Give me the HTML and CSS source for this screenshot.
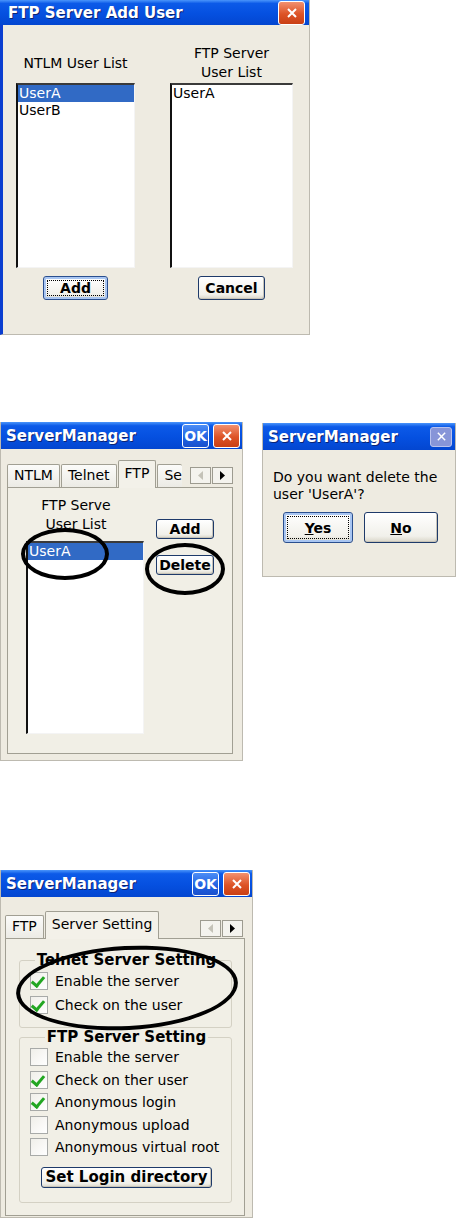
FILE: index.html
```html
<!DOCTYPE html>
<html lang="en">
<head>
    <meta charset="UTF-8">
    <meta name="viewport" content="width=device-width, initial-scale=1.0">
    <title>FTP Server User Management</title>
    <link rel="stylesheet" href="styles.css">
</head>
<body>
    <div class="page">

        <!-- Add user dialog -->
        <section class="window add-user">
            <div class="titlebar">
                <span class="title">FTP Server Add User</span>
                <span class="tb-btn tb-close">
                    <svg width="12" height="12" viewBox="0 0 12 12"><path d="M2 2 L10 10 M10 2 L2 10" stroke="#fff" stroke-width="2"/></svg>
                </span>
            </div>
            <div class="add-body">
                <div class="add-col">
                    <div class="col-label">NTLM User List</div>
                    <div class="listbox">
                        <div class="list-item selected">UserA</div>
                        <div class="list-item">UserB</div>
                    </div>
                    <button class="btn focused">Add</button>
                </div>
                <div class="add-col wide">
                    <div class="col-label">FTP Server<br>User List</div>
                    <div class="listbox">
                        <div class="list-item">UserA</div>
                    </div>
                    <button class="btn">Cancel</button>
                </div>
            </div>
        </section>

        <div class="row">
            <!-- ServerManager, FTP tab -->
            <section class="window manager">
                <div class="titlebar">
                    <span class="title">ServerManager</span>
                    <span class="tb-btn tb-ok">OK</span>
                    <span class="tb-btn tb-close">
                        <svg width="12" height="12" viewBox="0 0 12 12"><path d="M2 2 L10 10 M10 2 L2 10" stroke="#fff" stroke-width="2"/></svg>
                    </span>
                </div>
                <div class="win-body">
                    <div class="tabs">
                        <div class="tab">NTLM</div>
                        <div class="tab">Telnet</div>
                        <div class="tab active">FTP</div>
                        <div class="tab cut">Se</div>
                        <div class="tab-scroll">
                            <span class="scroll-btn"><svg width="6" height="9" viewBox="0 0 6 9"><path d="M5 0 L5 9 L0 4.5 Z" fill="#c4c2b8"/></svg></span>
                            <span class="scroll-btn"><svg width="6" height="9" viewBox="0 0 6 9"><path d="M0 0 L0 9 L5 4.5 Z" fill="#000"/></svg></span>
                        </div>
                    </div>
                    <div class="panel ftp-panel">
                        <div class="ftp-left">
                            <div class="ftp-label">FTP Serve<br>User List</div>
                            <div class="listbox ftp-list">
                                <div class="list-item selected">UserA</div>
                            </div>
                        </div>
                        <div class="ftp-buttons">
                            <button class="btn small">Add</button>
                            <button class="btn small">Delete</button>
                        </div>
                    </div>
                </div>
                <span class="mark mark-user"></span>
                <span class="mark mark-delete"></span>
            </section>

            <!-- Confirmation box -->
            <section class="window msgbox">
                <div class="titlebar">
                    <span class="title">ServerManager</span>
                    <span class="tb-btn tb-dim">
                        <svg width="11" height="11" viewBox="0 0 12 12"><path d="M2 2 L10 10 M10 2 L2 10" stroke="#fff" stroke-width="1.6"/></svg>
                    </span>
                </div>
                <div class="msg-body">
                    <p class="msg-text">Do you want delete the<br>user 'UserA'?</p>
                    <div class="msg-buttons">
                        <button class="btn big focused"><u>Y</u>es</button>
                        <button class="btn big"><u>N</u>o</button>
                    </div>
                </div>
            </section>
        </div>

        <!-- ServerManager, Server Setting tab -->
        <section class="window manager settings">
            <div class="titlebar">
                <span class="title">ServerManager</span>
                <span class="tb-btn tb-ok">OK</span>
                <span class="tb-btn tb-close">
                    <svg width="12" height="12" viewBox="0 0 12 12"><path d="M2 2 L10 10 M10 2 L2 10" stroke="#fff" stroke-width="2"/></svg>
                </span>
            </div>
            <div class="win-body">
                <div class="tabs">
                    <div class="tab">FTP</div>
                    <div class="tab active">Server Setting</div>
                    <div class="tab-scroll">
                        <span class="scroll-btn"><svg width="6" height="9" viewBox="0 0 6 9"><path d="M5 0 L5 9 L0 4.5 Z" fill="#c4c2b8"/></svg></span>
                        <span class="scroll-btn"><svg width="6" height="9" viewBox="0 0 6 9"><path d="M0 0 L0 9 L5 4.5 Z" fill="#000"/></svg></span>
                    </div>
                </div>
                <div class="panel settings-panel">
                    <fieldset class="group telnet-group">
                        <legend>Telnet Server Setting</legend>
                        <label class="check-row"><span class="checkbox checked"></span>Enable the server</label>
                        <label class="check-row"><span class="checkbox checked"></span>Check on the user</label>
                    </fieldset>
                    <fieldset class="group ftp-group">
                        <legend>FTP Server Setting</legend>
                        <label class="check-row"><span class="checkbox"></span>Enable the server</label>
                        <label class="check-row"><span class="checkbox checked"></span>Check on ther user</label>
                        <label class="check-row"><span class="checkbox checked"></span>Anonymous login</label>
                        <label class="check-row"><span class="checkbox"></span>Anonymous upload</label>
                        <label class="check-row"><span class="checkbox"></span>Anonymous virtual root</label>
                        <button class="btn login-btn">Set Login directory</button>
                    </fieldset>
                </div>
            </div>
            <span class="mark mark-telnet"></span>
        </section>

    </div>
</body>
</html>
```

FILE: styles.css
```css
* {
    box-sizing: border-box;
}

body {
    margin: 0;
    background: #fff;
    font-family: "DejaVu Sans", sans-serif;
    font-size: 14px;
    color: #000;
}

.page {
    display: flex;
    flex-direction: column;
    align-items: flex-start;
}

.row {
    display: flex;
    align-items: flex-start;
    gap: 19px;
    margin-top: 87px;
}

/* Window chrome */
.window {
    position: relative;
    display: flex;
    flex-direction: column;
    background: #eeebe1;
    border: 1px solid #bdbab0;
    border-top: none;
}

.titlebar {
    display: flex;
    align-items: center;
    gap: 4px;
    height: 27px;
    padding: 0 2px 0 5px;
    background: linear-gradient(#4a95fb 0%, #0c5ae8 14%, #0550e0 55%, #0346d0 100%);
}

.title {
    flex: 1;
    color: #fff;
    font-weight: bold;
    font-size: 15px;
    white-space: nowrap;
    overflow: hidden;
    text-shadow: 1px 1px 0 #0b2474;
}

.tb-btn {
    display: flex;
    align-items: center;
    justify-content: center;
    width: 27px;
    height: 24px;
    border: 1px solid #fff;
    border-radius: 3px;
}

.tb-close {
    background: linear-gradient(#f29170, #dd5326 55%, #c93f14);
}

.tb-ok {
    background: linear-gradient(#4c8ef6, #1f5fe0 60%, #1a50cc);
    color: #fff;
    font-weight: bold;
    font-size: 14px;
}

.tb-dim {
    width: 22px;
    height: 20px;
    border: 1px solid #b8c2ee;
    background: #8795d8;
}

/* Buttons */
.btn {
    font-family: "DejaVu Sans", sans-serif;
    font-weight: bold;
    font-size: 14px;
    color: #000;
    padding: 0 6px;
    border: 1px solid #1e3a6a;
    border-radius: 3px;
    background: linear-gradient(#ffffff, #f1f0ea 80%, #d9d5c8);
    box-shadow: inset -1px -1px 0 #c8c4b8;
}

.btn.focused {
    border-color: #2a4f8f;
    box-shadow: inset 0 0 0 2px #a9c6f2;
    outline: 1px dotted #000;
    outline-offset: -5px;
}

/* List boxes */
.listbox {
    background: #fff;
    border-top: 2px solid #3a3a3a;
    border-left: 2px solid #111;
    border-right: 1px solid #f4f4f4;
    border-bottom: 1px solid #f4f4f4;
}

.list-item {
    height: 17px;
    line-height: 17px;
    padding-left: 1px;
}

.list-item.selected {
    background: #316ac5;
    color: #fff;
}

/* Add user dialog */
.add-user {
    width: 310px;
    height: 335px;
    border-left: 3px solid #0a3ed0;
}

.add-user .titlebar {
    height: 25px;
    margin-left: -3px;
    padding-left: 8px;
}

.add-user .tb-close {
    margin-right: 2px;
}

.add-body {
    display: flex;
    gap: 35px;
    padding-left: 13px;
}

.add-col {
    display: flex;
    flex-direction: column;
    align-items: center;
    width: 119px;
}

.add-col.wide {
    width: 123px;
}

.col-label {
    display: flex;
    align-items: center;
    justify-content: center;
    height: 58px;
    padding-top: 18px;
    text-align: center;
    line-height: 19px;
}

.add-col .listbox {
    width: 100%;
    height: 185px;
}

.add-col .btn {
    margin-top: 8px;
    height: 24px;
    min-width: 65px;
}

/* ServerManager windows */
.manager {
    width: 243px;
    height: 339px;
}

.win-body {
    padding: 11px 0 0 6px;
}

.tabs {
    display: flex;
    align-items: flex-end;
    height: 27px;
    width: 226px;
}

.tab {
    height: 23px;
    line-height: 21px;
    padding: 0 6px;
    margin-right: 1px;
    border: 1px solid #a19f93;
    border-bottom: none;
    border-radius: 2px 2px 0 0;
    background: linear-gradient(#fbfbf9, #ecebe5);
    white-space: nowrap;
}

.tab.active {
    position: relative;
    height: 28px;
    line-height: 25px;
    margin-bottom: -1px;
    background: #f3f1e9;
}

.tab.cut {
    width: 25px;
    overflow: hidden;
    padding-right: 0;
    margin-right: 0;
    border-right: none;
}

.tab-scroll {
    display: flex;
    margin-left: auto;
    margin-bottom: 3px;
}

.scroll-btn {
    display: flex;
    align-items: center;
    justify-content: center;
    width: 21px;
    height: 17px;
    margin-left: 1px;
    border: 1px solid #9d9b90;
    background: #f4f3ee;
}

.panel {
    border: 1px solid #a19f93;
    background: #f1efe6;
}

.ftp-panel {
    display: flex;
    gap: 12px;
    width: 226px;
    height: 267px;
    padding: 8px 0 0 11px;
}

.ftp-label {
    width: 114px;
    text-align: center;
    line-height: 19px;
}

.ftp-list {
    width: 118px;
    height: 193px;
    margin: 7px 0 0 7px;
}

.ftp-buttons {
    display: flex;
    flex-direction: column;
    gap: 16px;
    padding-top: 23px;
}

.btn.small {
    width: 58px;
    height: 20px;
    padding: 0;
}

/* Confirmation box */
.msgbox {
    width: 194px;
    height: 154px;
    margin-top: 1px;
}

.msgbox .titlebar {
    padding-right: 3px;
}

.msg-body {
    padding: 19px 0 0 10px;
}

.msg-text {
    margin: 0;
    line-height: 17px;
}

.msg-buttons {
    display: flex;
    gap: 11px;
    margin: 9px 0 0 10px;
}

.btn.big {
    width: 70px;
    height: 31px;
}

.btn.big + .btn.big {
    width: 74px;
}

/* Server setting tab */
.settings {
    width: 253px;
    height: 348px;
    margin-top: 109px;
}

.settings .win-body {
    padding: 13px 0 0 4px;
}

.settings .tabs {
    width: 240px;
    height: 28px;
}

.settings .tab-scroll {
    margin-bottom: 1px;
    margin-right: 2px;
}

.settings-panel {
    width: 240px;
    height: 278px;
    padding: 12px 12px 0 13px;
}

.group {
    margin: 0;
    padding: 0 8px 0 10px;
    border: 1px solid #d4d1c4;
    border-radius: 3px;
}

.group legend {
    margin: 0 auto;
    padding: 0 2px;
    font-weight: bold;
    font-size: 15px;
    line-height: 18px;
}

.telnet-group {
    padding-bottom: 10px;
}

.ftp-group {
    padding-bottom: 14px;
}

.check-row {
    display: flex;
    align-items: center;
    gap: 7px;
    height: 24px;
}

.ftp-group .check-row {
    height: 22.5px;
}

.checkbox {
    position: relative;
    width: 18px;
    height: 18px;
    border: 1px solid #a8aaa8;
    background: linear-gradient(135deg, #f0efe9, #ffffff);
}

.checkbox.checked::after {
    content: "";
    position: absolute;
    left: 3px;
    top: 1px;
    width: 5px;
    height: 10px;
    border: solid #22a622;
    border-width: 0 3px 3px 0;
    transform: rotate(40deg);
}

.login-btn {
    display: block;
    margin: 8px auto 0;
    height: 21px;
    padding: 0 3px;
    font-size: 15px;
    line-height: 18px;
}

/* Hand-drawn highlight marks */
.mark {
    position: absolute;
    border: 4px solid #000;
    border-radius: 50%;
    pointer-events: none;
}

.mark-user {
    left: 20px;
    top: 106px;
    width: 88px;
    height: 52px;
}

.mark-delete {
    left: 144px;
    top: 121px;
    width: 80px;
    height: 52px;
}

.mark-telnet {
    left: 15px;
    top: 76px;
    width: 222px;
    height: 84px;
    transform: rotate(-3deg);
}
```
